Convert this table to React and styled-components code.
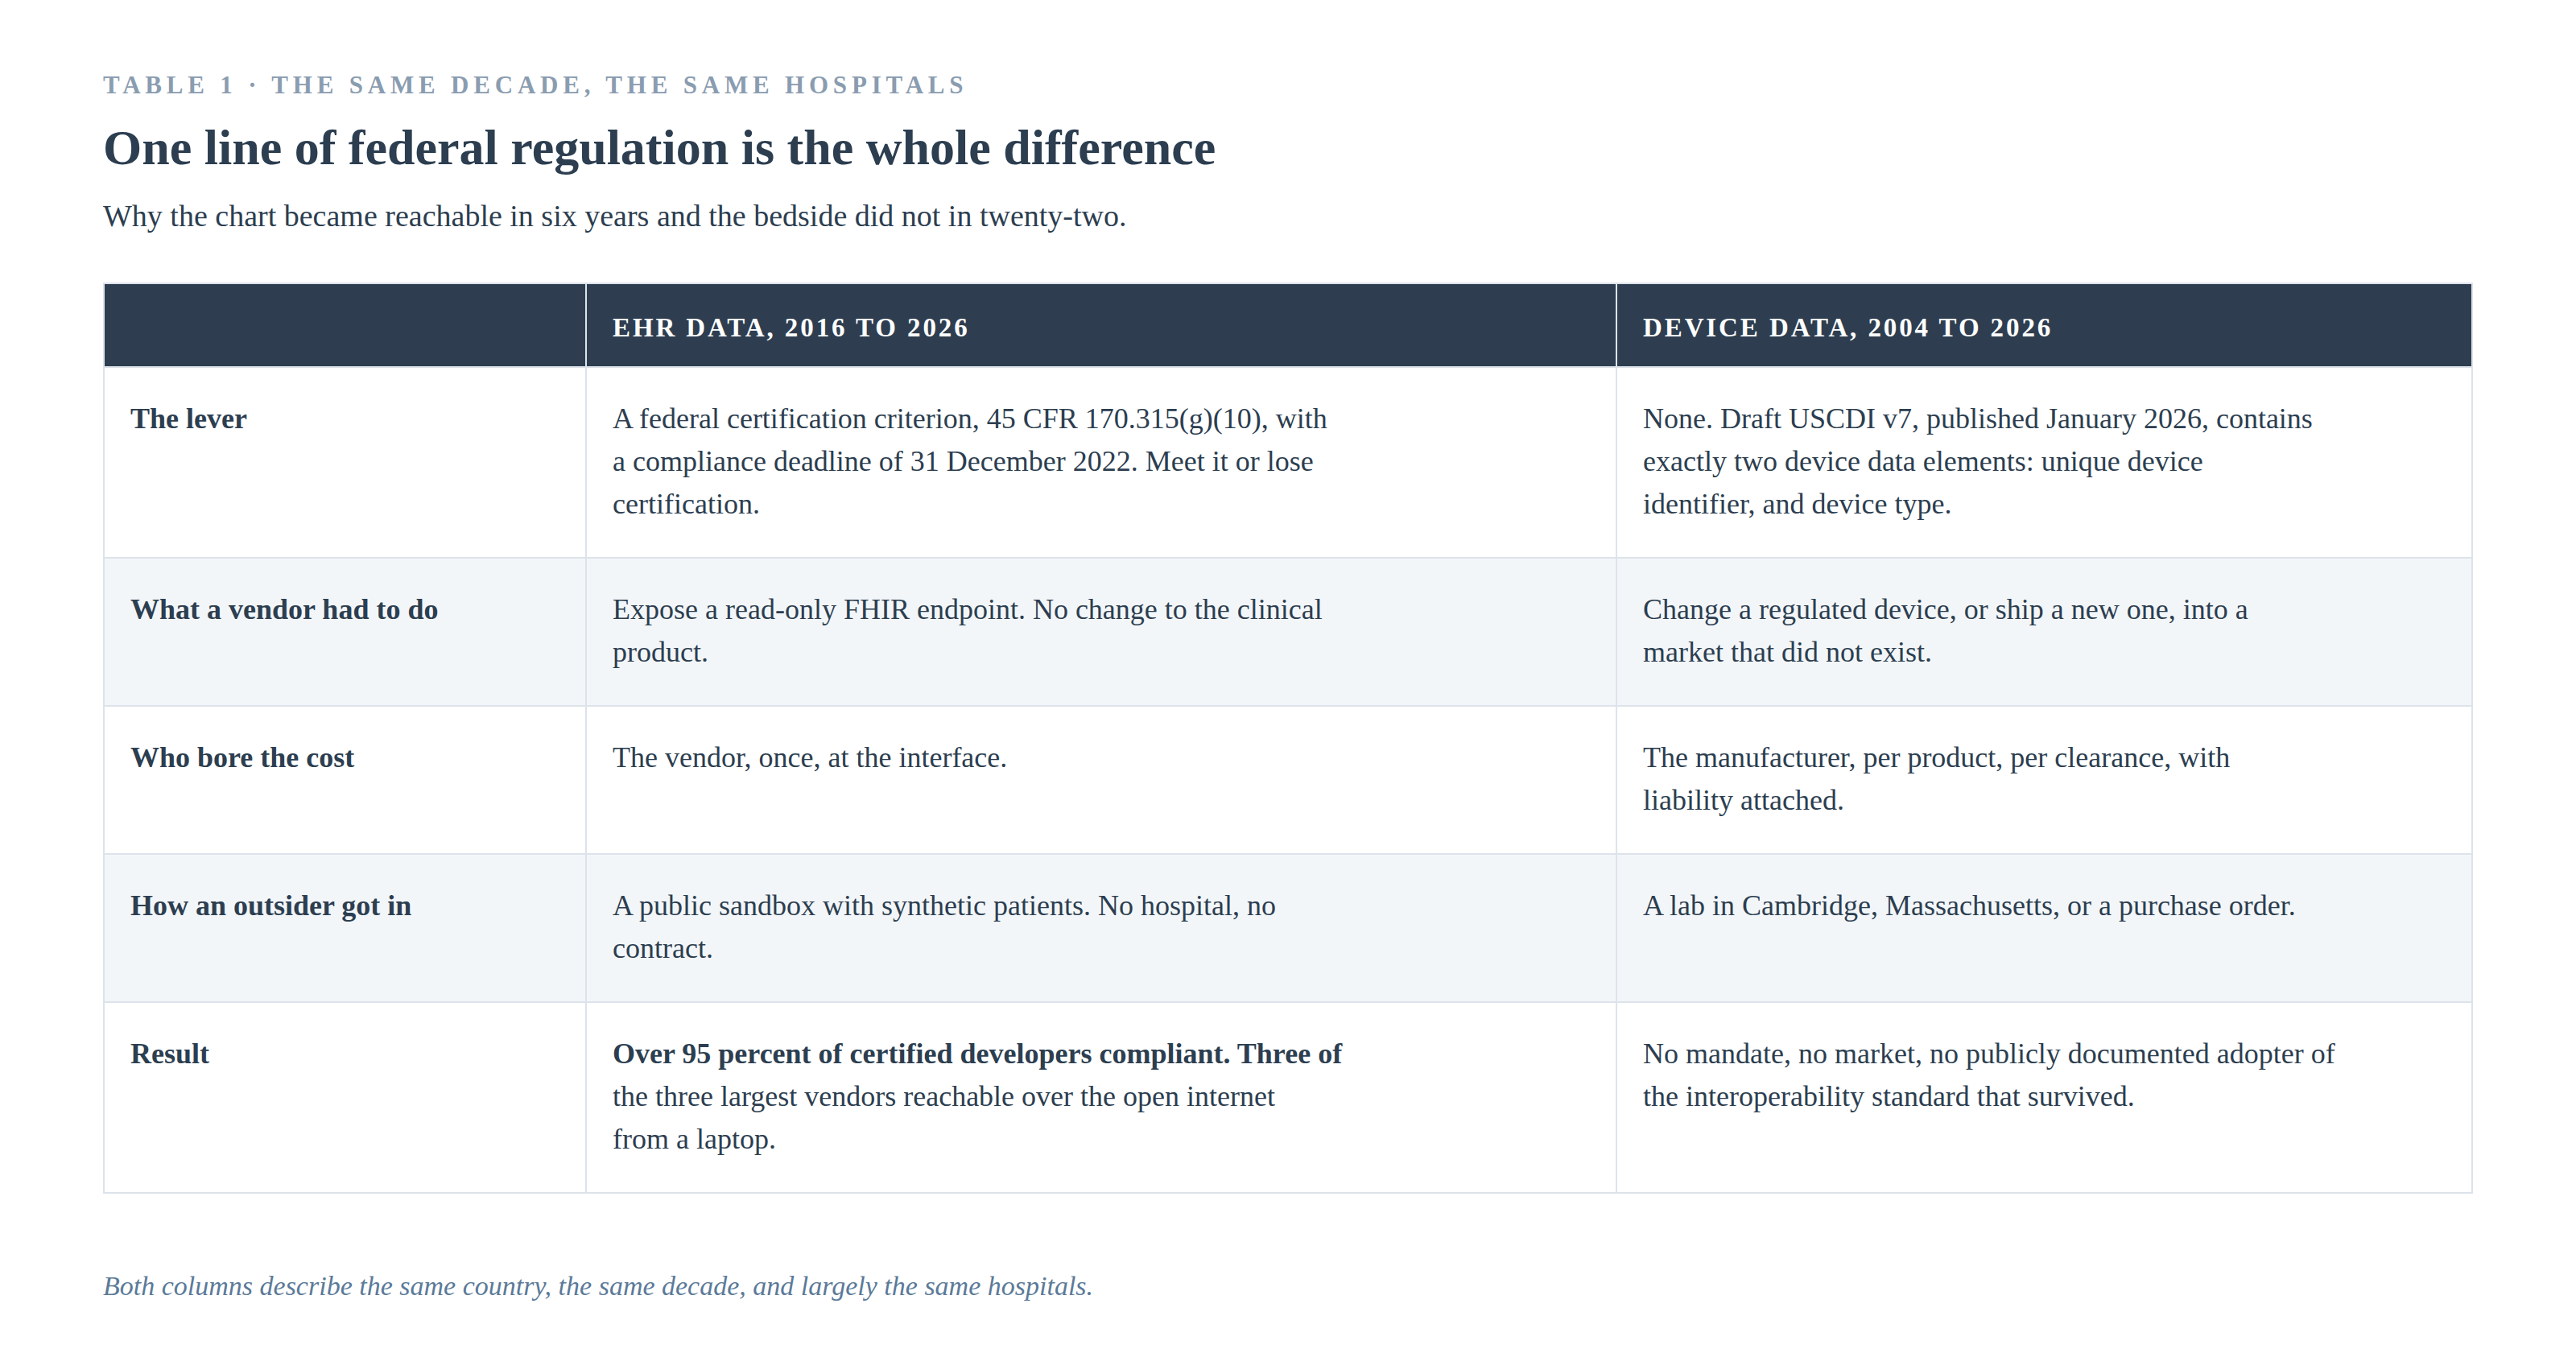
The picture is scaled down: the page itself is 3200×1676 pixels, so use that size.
import React from "react";
import styled, { createGlobalStyle } from "styled-components";

const rows = [
  {
    label: "The lever",
    ehr: [
      "A federal certification criterion, 45 CFR 170.315(g)(10), with",
      "a compliance deadline of 31 December 2022. Meet it or lose",
      "certification.",
    ],
    device: [
      "None. Draft USCDI v7, published January 2026, contains",
      "exactly two device data elements: unique device",
      "identifier, and device type.",
    ],
  },
  {
    label: "What a vendor had to do",
    ehr: ["Expose a read-only FHIR endpoint. No change to the clinical", "product."],
    device: ["Change a regulated device, or ship a new one, into a", "market that did not exist."],
  },
  {
    label: "Who bore the cost",
    ehr: ["The vendor, once, at the interface."],
    device: ["The manufacturer, per product, per clearance, with", "liability attached."],
  },
  {
    label: "How an outsider got in",
    ehr: ["A public sandbox with synthetic patients. No hospital, no", "contract."],
    device: ["A lab in Cambridge, Massachusetts, or a purchase order."],
  },
  {
    label: "Result",
    ehr: [
      <strong key="lead">Over 95 percent of certified developers compliant. Three of</strong>,
      "the three largest vendors reachable over the open internet",
      "from a laptop.",
    ],
    device: [
      "No mandate, no market, no publicly documented adopter of",
      "the interoperability standard that survived.",
    ],
  },
];

function Lines({ lines }) {
  return (
    <CellText>
      {lines.map((line, i) => (
        <React.Fragment key={i}>
          {i > 0 && <br />}
          {line}
        </React.Fragment>
      ))}
    </CellText>
  );
}

export default function App() {
  return (
    <>
      <GlobalStyle />
      <Page>
        <Eyebrow>Table 1 · The same decade, the same hospitals</Eyebrow>
        <Title>One line of federal regulation is the whole difference</Title>
        <Lede>Why the chart became reachable in six years and the bedside did not in twenty-two.</Lede>

        <Table>
          <colgroup>
            <col style={{ width: "599px" }} />
            <col style={{ width: "1280px" }} />
            <col />
          </colgroup>
          <thead>
            <tr>
              <HeadCell />
              <HeadCell>EHR data, 2016 to 2026</HeadCell>
              <HeadCell>Device data, 2004 to 2026</HeadCell>
            </tr>
          </thead>
          <tbody>
            {rows.map((row, i) => (
              <Row key={row.label} $shaded={i % 2 === 1}>
                <RowLabel>{row.label}</RowLabel>
                <Cell>
                  <Lines lines={row.ehr} />
                </Cell>
                <Cell>
                  <Lines lines={row.device} />
                </Cell>
              </Row>
            ))}
          </tbody>
        </Table>

        <Note>Both columns describe the same country, the same decade, and largely the same hospitals.</Note>
      </Page>
    </>
  );
}

const GlobalStyle = createGlobalStyle`
  html, body {
    margin: 0;
    padding: 0;
    background: #ffffff;
  }
  body {
    font-family: "Liberation Serif", "Times New Roman", serif;
    color: #2c3e50;
  }
`;

const Page = styled.main`
  padding: 88px 128px 64px;
`;

const Eyebrow = styled.div`
  font-size: 31px;
  line-height: 36px;
  font-weight: 700;
  letter-spacing: 5.8px;
  text-transform: uppercase;
  color: #8a9cb0;
`;

const Title = styled.h1`
  margin: 22px 0 0;
  font-size: 62px;
  line-height: 74px;
  font-weight: 700;
  color: #2c3e50;
`;

const Lede = styled.p`
  margin: 22px 0 0;
  font-size: 38px;
  line-height: 52px;
  color: #2c3e50;
`;

const Table = styled.table`
  margin-top: 57px;
  width: 100%;
  table-layout: fixed;
  border-collapse: collapse;
  border: 2px solid #dde3ea;
`;

const HeadCell = styled.th`
  padding: 28px 32px 22px;
  background: #2e3e50;
  border: 2px solid #dde3ea;
  text-align: left;
  font-size: 33px;
  line-height: 52px;
  font-weight: 700;
  letter-spacing: 2.9px;
  text-transform: uppercase;
  color: #ffffff;
`;

const Row = styled.tr`
  background: ${(p) => (p.$shaded ? "#f3f6f9" : "#ffffff")};
`;

const Cell = styled.td`
  padding: 37px 32px 39px;
  border: 2px solid #dde3ea;
  vertical-align: top;
  font-size: 36px;
  line-height: 53px;
  color: #2c3e50;
`;

const RowLabel = styled(Cell)`
  font-weight: 700;
`;

const CellText = styled.div`
  max-width: 960px;

  strong {
    font-weight: 700;
  }
`;

const Note = styled.p`
  margin: 91px 0 0;
  font-size: 34px;
  line-height: 48px;
  font-style: italic;
  color: #5b7a99;
`;
